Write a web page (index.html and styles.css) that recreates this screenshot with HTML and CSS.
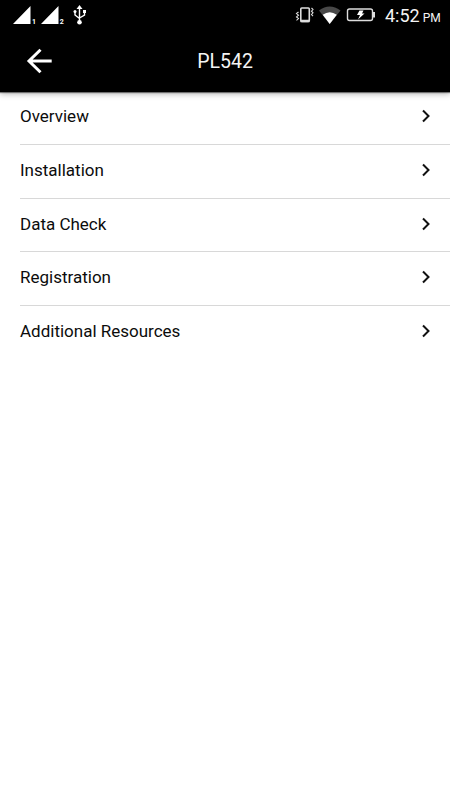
FILE: index.html
```html
<!DOCTYPE html>
<html lang="en">
<head>
<meta charset="utf-8">
<title>PL542</title>
<link rel="stylesheet" href="styles.css">
</head>
<body>
<header class="top">
  <div class="status">
    <svg class="status-left" width="90" height="30" viewBox="0 0 90 30" fill="#fff">
      <path d="M13 24L30.500 6V24zM41 24L58.500 6V24z"/>
      <text class="sim" x="32" y="24">1</text><text class="sim" x="59.700" y="24">2</text>
      <path d="M79.500 5l-3 4h6z"/><circle cx="79.500" cy="22.300" r="2.300"/><circle cx="75" cy="11.500" r="1.500"/><path d="M83 10h3v3h-3z"/>
      <path d="M79.500 8v14M75 11v4l4.500 3.500M84.500 12v3l-5 3" fill="none" stroke="#fff" stroke-width="1.400"/>
    </svg>
    <div class="status-right">
      <svg width="85" height="30" viewBox="295 0 85 30" fill="none" stroke="#ddd">
        <rect x="300.800" y="8" width="8.500" height="13.500" rx="1" stroke-width="1.600"/>
        <path d="M300.500 21h9" stroke-width="2.500"/>
        <path d="M298.500 12l-2 1.500 2 1.700-2 1.700 2 1.700-2 1.700M311.500 8l1.500 1.500-1.500 1.700 1.500 1.600-1.500 1.700 1.500 1.700" stroke-width="1.100"/>
        <path d="M319 10.500Q329.500 2.500 340.500 10.500L329.700 24z" fill="#484848" stroke="none"/>
        <path d="M322.700 14.800Q329.700 9.800 336.800 14.800L329.700 24z" fill="#fff" stroke="none"/>
        <rect x="347.500" y="9" width="25" height="11.500" rx="2" stroke-width="1.400"/>
        <path d="M374 12v5.500" stroke-width="2"/>
        <path d="M359.500 10.500h4l-1.500 3h2.500l-6.500 6 2-4.500h-3z" fill="#fff" stroke="none"/>
      </svg>
      <span class="time">4:52</span><span class="meridiem">PM</span>
    </div>
  </div>
  <div class="bar">
    <svg class="back" width="26" height="26" viewBox="26 48 26 26" fill="none" stroke="#fff" stroke-width="3"><path d="M51.700 61H29M40.500 49.700L29 61l11.500 11.300"/></svg>
    <h1 class="title">PL542</h1>
  </div>
</header>
<ul class="list">
  <li class="row"><span>Overview</span><svg class="chevron" viewBox="0 0 10 14"><path d="M2 1.500L7.500 7 2 12.500"/></svg></li>
  <li class="row"><span>Installation</span><svg class="chevron" viewBox="0 0 10 14"><path d="M2 1.500L7.500 7 2 12.500"/></svg></li>
  <li class="row"><span>Data Check</span><svg class="chevron" viewBox="0 0 10 14"><path d="M2 1.500L7.500 7 2 12.500"/></svg></li>
  <li class="row"><span>Registration</span><svg class="chevron" viewBox="0 0 10 14"><path d="M2 1.500L7.500 7 2 12.500"/></svg></li>
  <li class="row"><span>Additional Resources</span><svg class="chevron" viewBox="0 0 10 14"><path d="M2 1.500L7.500 7 2 12.500"/></svg></li>
</ul>
</body>
</html>
```
FILE: styles.css
```css
* { box-sizing: border-box; }
body { margin: 0; min-height: 800px; background: #fff; color: #0c0c0c; font-family: Roboto, sans-serif; }
svg { display: block; flex: none; }
.top { height: 92px; background: #000; color: #f4f4f4; box-shadow: 0 1px 1px rgba(0,0,0,.45), 0 2px 6px rgba(0,0,0,.3); }
.status { display: flex; justify-content: space-between; height: 30px; }
.sim { font-size: 7px; font-weight: 700; }
.status-right { display: flex; align-items: baseline; width: 155px; height: 30px; }
.status-right svg { align-self: flex-start; }
.time { margin-left: 5px; font-size: 18px; line-height: 31px; }
.meridiem { margin-left: 3px; font-size: 12px; }
.bar { display: grid; grid-template-columns: 52px 1fr 52px; align-items: center; height: 62px; }
.back { justify-self: end; }
.title { margin: 0; padding-top: 2px; font-size: 19.500px; font-weight: 400; line-height: 24px; text-align: center; }
.list { margin: 0; padding: 0 0 0 20px; list-style: none; }
.row { display: flex; align-items: center; justify-content: space-between; height: 53.750px; padding: 0 19px 2.400px 0; border-bottom: 1px solid #d8d8d8; font-size: 17px; line-height: 20px; }
.row:first-child { height: 52.800px; padding-bottom: 3px; }
.row:last-child { border-bottom: 0; padding-bottom: 4px; }
.chevron { width: 10px; height: 14px; fill: none; stroke: #111; stroke-width: 2; }
```
